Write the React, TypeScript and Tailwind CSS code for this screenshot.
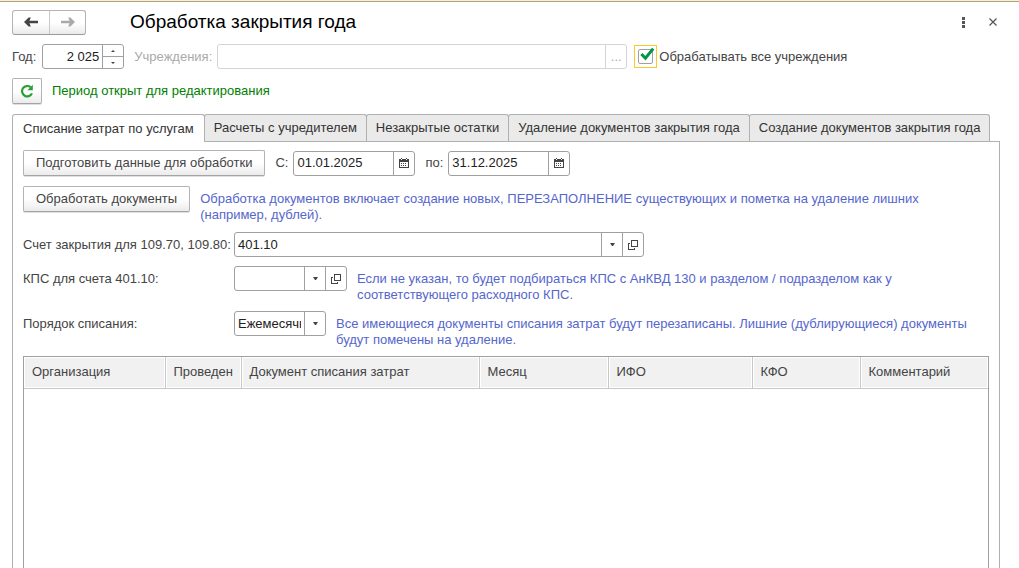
import React, { useState } from 'react';

const TABS = [
  'Списание затрат по услугам',
  'Расчеты с учредителем',
  'Незакрытые остатки',
  'Удаление документов закрытия года',
  'Создание документов закрытия года',
];

const COLUMNS = [
  { title: 'Организация', width: 'w-[141px]' },
  { title: 'Проведен', width: 'w-[76px]' },
  { title: 'Документ списания затрат', width: 'w-[238px]' },
  { title: 'Месяц', width: 'w-[129px]' },
  { title: 'ИФО', width: 'w-[144px]' },
  { title: 'КФО', width: 'w-[108px]' },
  { title: 'Комментарий', width: '' },
];

const FIELD = 'flex h-[25px] shrink-0 overflow-hidden rounded-[3px] border border-[#a0a0a0] bg-white';
const FIELD_INPUT = 'min-w-0 grow bg-transparent px-[3px] text-[#222] outline-none';
const FIELD_BUTTON = 'flex w-[21px] shrink-0 items-center justify-center border-l border-[#a0a0a0]';
const PUSH_BUTTON =
  'flex h-[26px] shrink-0 items-center justify-center rounded-[2px] border border-[#b3b3b3] border-b-[#a4a4a4] bg-gradient-to-b from-white from-50% to-[#ebebeb] shadow-[0_1px_0_#e0e0e0] cursor-pointer';

function ArrowIcon({ className }: { className: string }) {
  return (
    <svg width="14" height="10" viewBox="0 0 14 10" className={className} aria-hidden="true">
      <path d="M5 5h9" fill="none" stroke="currentColor" strokeWidth="2.4" />
      <path d="M0 5 4.6 0.4h2.2L5 5l1.8 4.6H4.6z" fill="currentColor" />
    </svg>
  );
}

function RefreshIcon() {
  return (
    <svg width="14" height="14" viewBox="0 0 14 14" aria-hidden="true">
      <path d="M12 9.4A5.2 5.2 0 1 1 10.6 3.2" fill="none" stroke="#2a9f36" strokeWidth="2.2" />
      <path d="M12.8 0.8v5.4H7.4z" fill="#2a9f36" />
    </svg>
  );
}

function CalendarIcon() {
  return (
    <svg width="10" height="10" viewBox="0 0 10 10" shapeRendering="crispEdges" aria-hidden="true">
      <path d="M0 1h10v9H0zM1 4v5h8V4z" fill="#444" fillRule="evenodd" />
      <path d="M2 0h1v1H2zM7 0h1v1H7z" fill="#444" />
      <path d="M2 1h1v1H2zM7 1h1v1H7z" fill="#fff" />
      <path d="M2 5h1v1H2zM4 5h1v1H4zM6 5h1v1H6zM2 7h1v1H2zM4 7h1v1H4zM6 7h1v1H6z" fill="#444" />
    </svg>
  );
}

function CaretIcon() {
  return (
    <svg width="5" height="3" viewBox="0 0 5 3" aria-hidden="true">
      <path d="M0 0h5L3 3H2z" fill="#444" />
    </svg>
  );
}

function OpenIcon() {
  return (
    <svg width="10" height="10" viewBox="0 0 10 10" shapeRendering="crispEdges" aria-hidden="true">
      <path d="M3.5 0.5h6v6h-6zM2 3.5H0.5v6h6V8" fill="none" stroke="#444" />
    </svg>
  );
}

function DateField({ id, label, value }: { id: string; label: string; value: string }) {
  return (
    <div className="flex items-center">
      <label htmlFor={id} className="mr-[5px]">{label}</label>
      <div className={`${FIELD} w-[122px]`}>
        <input id={id} type="text" defaultValue={value} className={FIELD_INPUT} />
        <button type="button" aria-label="Выбрать дату" className={FIELD_BUTTON}>
          <CalendarIcon />
        </button>
      </div>
    </div>
  );
}

function Hint({ children }: { children: React.ReactNode }) {
  return <p className="ml-[10px] min-w-0 grow pt-[5px] leading-[16px] text-[#5566cc]">{children}</p>;
}

export default function App() {
  const [year, setYear] = useState(2025);
  const [tab, setTab] = useState(0);
  const yearText = `${Math.floor(year / 1000)} ${String(year % 1000).padStart(3, '0')}`;

  return (
    <div className="flex min-h-screen flex-col bg-white text-[13px] leading-[16px] text-[#444] [font-family:'Liberation_Sans',Arial,sans-serif]">
      <div className="h-[2px] border-b border-[#a8a294] bg-[#fff0c0]" />

      {/* Title bar */}
      <header className="mt-2 flex h-[24px] items-center pl-3 pr-4">
        <div className="flex h-[25px] w-[74px] overflow-hidden rounded-[3px] border border-[#b3b3b3] border-b-[#9a9a9a] bg-gradient-to-b from-white from-50% to-[#ebebeb]">
          <button type="button" aria-label="Назад" className="flex w-[37px] items-center justify-center border-r border-[#c8c8c8]">
            <ArrowIcon className="text-[#444]" />
          </button>
          <button type="button" aria-label="Вперед" className="flex grow items-center justify-center">
            <ArrowIcon className="rotate-180 text-[#aaa]" />
          </button>
        </div>
        <h1 className="ml-11 grow text-[19px] leading-[24px] text-black">Обработка закрытия года</h1>
        <button type="button" aria-label="Еще" className="flex h-5 w-5 items-center justify-center">
          <svg width="3" height="11" viewBox="0 0 3 11" aria-hidden="true">
            <path d="M0 0h3v3H0zM0 4h3v3H0zM0 8h3v3H0z" fill="#555" />
          </svg>
        </button>
        <button type="button" aria-label="Закрыть" className="ml-[10px] flex h-5 w-5 items-center justify-center">
          <svg width="8" height="8" viewBox="0 0 8 8" aria-hidden="true">
            <path d="M0.5 0.5l7 7M7.5 0.5l-7 7" stroke="#555" strokeWidth="1.2" />
          </svg>
        </button>
      </header>

      {/* Year and institutions */}
      <div className="mt-[10px] flex items-center px-3">
        <label htmlFor="year" className="mr-[6px]">Год:</label>
        <div className={`${FIELD} w-[82px]`}>
          <input id="year" type="text" readOnly value={yearText} className={`${FIELD_INPUT} text-right`} />
          <div className="flex w-[21px] shrink-0 flex-col border-l border-[#a0a0a0]">
            <button type="button" aria-label="Увеличить" onClick={() => setYear(year + 1)} className="flex h-[12px] items-center justify-center border-b border-[#a0a0a0]">
              <svg width="4" height="2" viewBox="0 0 4 2" aria-hidden="true"><path d="M0 2 2 0l2 2z" fill="#444" /></svg>
            </button>
            <button type="button" aria-label="Уменьшить" onClick={() => setYear(year - 1)} className="flex grow items-center justify-center">
              <svg width="4" height="2" viewBox="0 0 4 2" aria-hidden="true"><path d="M0 0h4L2 2z" fill="#444" /></svg>
            </button>
          </div>
        </div>
        <label htmlFor="orgs" className="ml-[10px] mr-[5px] text-[#aaa]">Учреждения:</label>
        <div className="flex h-[25px] w-[410px] overflow-hidden rounded-[3px] border border-[#d4d4d4]">
          <input id="orgs" type="text" disabled className={FIELD_INPUT} />
          <button type="button" disabled aria-label="Выбрать учреждения" className="flex w-[21px] shrink-0 items-center justify-center border-l border-[#d4d4d4] text-[#aaa]">
            ...
          </button>
        </div>
        <label className="ml-[7px] flex items-center">
          <span className="relative mr-[2px] flex h-[23px] w-[23px] items-center justify-center border border-[#f7c92a]">
            <input type="checkbox" defaultChecked className="peer h-[15px] w-[15px] appearance-none rounded-[2px] border border-[#a0a0a0] bg-white outline-none" />
            <svg width="15" height="14" viewBox="0 0 15 14" className="pointer-events-none absolute left-[5px] top-[1px] hidden peer-checked:block" aria-hidden="true">
              <path d="M1.4 7 5.4 11.2 13.2 1.6" fill="none" stroke="#009646" strokeWidth="3" />
            </svg>
          </span>
          Обрабатывать все учреждения
        </label>
      </div>

      {/* Period state */}
      <div className="mt-[9px] flex items-center px-3">
        <button type="button" aria-label="Обновить" className={`${PUSH_BUTTON} w-[30px]`}>
          <RefreshIcon />
        </button>
        <span className="ml-[10px] text-[#008000]">Период открыт для редактирования</span>
      </div>

      {/* Tabs */}
      <div role="tablist" className="mt-[10px] flex h-[27px] px-3">
        {TABS.map((title, idx) => (
          <button
            key={title}
            type="button"
            role="tab"
            aria-selected={tab === idx}
            onClick={() => setTab(idx)}
            className={`whitespace-nowrap rounded-t-[3px] border border-b-0 border-[#b0b0b0] text-[#333] not-first:-ml-px first:px-[10px] px-[9px] ${
              tab === idx ? 'z-10 h-[28px] bg-white' : 'h-[27px] bg-[#eaeaea]'
            }`}
          >
            {title}
          </button>
        ))}
      </div>

      <main className="ml-3 mr-[19px] flex grow flex-col border border-b-0 border-[#b0b0b0] px-[10px] pt-2">
        <div className="flex items-center">
          <button type="button" className={`${PUSH_BUTTON} mr-[10px] px-3`}>Подготовить данные для обработки</button>
          <DateField id="date-from" label="С:" value="01.01.2025" />
          <div className="w-[10px]" />
          <DateField id="date-to" label="по:" value="31.12.2025" />
        </div>

        <div className="mt-[10px] flex items-start">
          <button type="button" className={`${PUSH_BUTTON} px-3`}>Обработать документы</button>
          <Hint>
            Обработка документов включает создание новых, ПЕРЕЗАПОЛНЕНИЕ существующих и пометка на удаление лишних (например, дублей).
          </Hint>
        </div>

        <div className="mt-[9px] flex items-start">
          <label htmlFor="account" className="w-[211px] shrink-0 whitespace-nowrap pt-[5px]">Счет закрытия для 109.70, 109.80:</label>
          <div className={`${FIELD} w-[410px]`}>
            <input id="account" type="text" defaultValue="401.10" className={FIELD_INPUT} />
            <button type="button" aria-label="Выбрать счет" className={FIELD_BUTTON}><CaretIcon /></button>
            <button type="button" aria-label="Открыть счет" className={FIELD_BUTTON}><OpenIcon /></button>
          </div>
        </div>

        <div className="mt-[9px] flex items-start">
          <label htmlFor="kps" className="w-[211px] shrink-0 pt-[5px]">КПС для счета 401.10:</label>
          <div className={`${FIELD} w-[113px]`}>
            <input id="kps" type="text" className={FIELD_INPUT} />
            <button type="button" aria-label="Выбрать КПС" className={FIELD_BUTTON}><CaretIcon /></button>
            <button type="button" aria-label="Открыть КПС" className={FIELD_BUTTON}><OpenIcon /></button>
          </div>
          <Hint>
            Если не указан, то будет подбираться КПС с АнКВД 130 и разделом / подразделом как у соответствующего расходного КПС.
          </Hint>
        </div>

        <div className="mt-2 flex items-start">
          <label htmlFor="order" className="w-[211px] shrink-0 pt-[5px]">Порядок списания:</label>
          <div className={`${FIELD} relative w-[92px]`}>
            <select id="order" className="w-full appearance-none bg-transparent pl-[3px] pr-6 text-[#222] outline-none">
              <option>Ежемесячно</option>
              <option>Ежегодно</option>
            </select>
            <span className="pointer-events-none absolute inset-y-0 right-0 flex w-[21px] items-center justify-center border-l border-[#a0a0a0]">
              <CaretIcon />
            </span>
          </div>
          <Hint>
            Все имеющиеся документы списания затрат будут перезаписаны. Лишние (дублирующиеся) документы будут помечены на удаление.
          </Hint>
        </div>

        <div className="mt-2 grow border border-b-0 border-[#a0a0a0]">
          <table className="w-full table-fixed border-collapse">
            <thead>
              <tr className="h-[31px] border-b border-[#c8c8c8]">
                {COLUMNS.map((col) => (
                  <th
                    key={col.title}
                    className={`${col.width} whitespace-nowrap border-r border-[#c8c8c8] bg-[#f1f1f1] px-2 text-left font-normal shadow-[inset_0_0_0_1px_#fff] last:border-r-0`}
                  >
                    {col.title}
                  </th>
                ))}
              </tr>
            </thead>
            <tbody />
          </table>
        </div>
      </main>
    </div>
  );
}
